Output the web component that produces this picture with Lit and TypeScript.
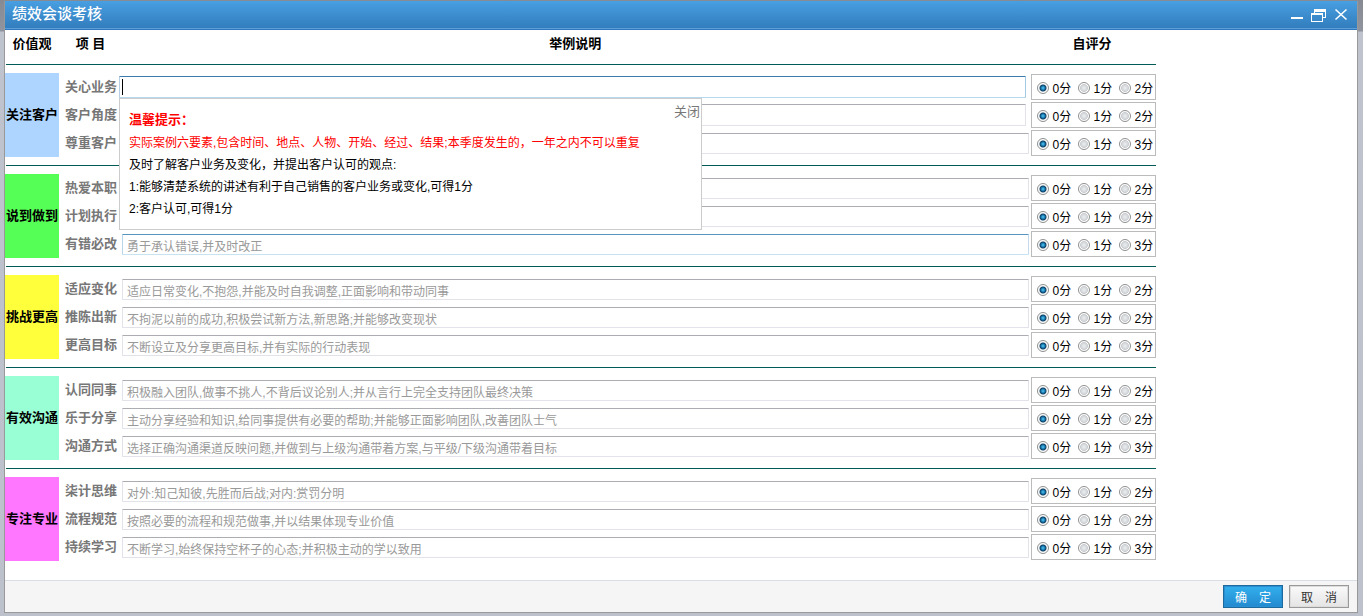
import { LitElement, html, css, nothing } from "lit";
import { customElement, state } from "lit/decorators.js";
import { classMap } from "lit/directives/class-map.js";

interface Item {
  name: string;
  hint: string;
  top: number;
  state?: "focus" | "edited" | "hover";
}

interface Group {
  name: string;
  tone: string;
  items: Item[];
}

const GROUPS: Group[] = [
  {
    name: "关注客户",
    tone: "blue",
    items: [
      { name: "关心业务", hint: "", top: 2, state: "focus" },
      { name: "客户角度", hint: "", top: 2, state: "edited" },
      { name: "尊重客户", hint: "", top: 3 },
    ],
  },
  {
    name: "说到做到",
    tone: "green",
    items: [
      { name: "热爱本职", hint: "", top: 2 },
      { name: "计划执行", hint: "", top: 2 },
      { name: "有错必改", hint: "勇于承认错误,并及时改正", top: 3, state: "hover" },
    ],
  },
  {
    name: "挑战更高",
    tone: "yellow",
    items: [
      { name: "适应变化", hint: "适应日常变化,不抱怨,并能及时自我调整,正面影响和带动同事", top: 2 },
      { name: "推陈出新", hint: "不拘泥以前的成功,积极尝试新方法,新思路;并能够改变现状", top: 2 },
      { name: "更高目标", hint: "不断设立及分享更高目标,并有实际的行动表现", top: 3 },
    ],
  },
  {
    name: "有效沟通",
    tone: "mint",
    items: [
      { name: "认同同事", hint: "积极融入团队,做事不挑人,不背后议论别人;并从言行上完全支持团队最终决策", top: 2 },
      { name: "乐于分享", hint: "主动分享经验和知识,给同事提供有必要的帮助;并能够正面影响团队,改善团队士气", top: 2 },
      { name: "沟通方式", hint: "选择正确沟通渠道反映问题,并做到与上级沟通带着方案,与平级/下级沟通带着目标", top: 3 },
    ],
  },
  {
    name: "专注专业",
    tone: "pink",
    items: [
      { name: "柒计思维", hint: "对外:知己知彼,先胜而后战;对内:赏罚分明", top: 2 },
      { name: "流程规范", hint: "按照必要的流程和规范做事,并以结果体现专业价值", top: 2 },
      { name: "持续学习", hint: "不断学习,始终保持空杯子的心态;并积极主动的学以致用", top: 3 },
    ],
  },
];

@customElement("score-picker")
export class ScorePicker extends LitElement {
  static properties = { name: { type: String }, label: { type: String }, top: { type: Number } };
  declare name: string;
  declare label: string;
  declare top: number;

  static styles = css`
    :host {
      display: block;
    }
    .box {
      box-sizing: border-box;
      height: 26px;
      border: 1px solid #bbb;
      padding: 3px 0 0 5px;
      display: grid;
      grid-template-columns: 41px 41px auto;
      align-items: center;
      background: #fff;
    }
    .choice {
      display: flex;
      align-items: center;
      gap: 4px;
      color: #000;
      white-space: nowrap;
    }
    .dot {
      appearance: none;
      box-sizing: border-box;
      flex: none;
      width: 12px;
      height: 12px;
      margin: 0 0 2px;
      border: 1px solid #8e8f8f;
      border-radius: 50%;
      background: radial-gradient(circle closest-side, #eceeef 0, #d3d6d9 60%, #c9ccd0 72%, #fff 86%);
    }
    .dot:checked {
      background: radial-gradient(circle closest-side, #5cc6ee 0, #1f8cc4 30%, #0f4166 60%, #e4e8eb 78%, #fff 90%);
    }
  `;

  render() {
    return html`<div class="box" role="radiogroup" aria-label=${this.label}>
      ${[0, 1, this.top].map(
        (n) => html`<label class="choice"
          ><input class="dot" type="radio" name=${this.name} value=${n} ?checked=${n === 0} /><span>${n}分</span></label
        >`
      )}
    </div>`;
  }
}

@customElement("app-root")
export class AppRoot extends LitElement {
  @state() private tipOpen = true;

  static styles = css`
    :host {
      display: flex;
      box-sizing: border-box;
      min-height: 100vh;
      padding: 1px 5px 3px 4px;
      font: 12px/18px "Liberation Sans", "Noto Sans CJK SC", sans-serif;
      color: #000;
      background: linear-gradient(#858a93 0, #8f949e 31px, #bfc3ce 32px, #bcc1cb 100%);
    }
    .dialog {
      flex: 1;
      min-width: 0;
      display: flex;
      flex-direction: column;
      border: 1px solid #999;
      border-top-width: 0;
      background: #fff;
    }
    .titlebar {
      box-sizing: border-box;
      height: 29px;
      display: flex;
      align-items: center;
      justify-content: space-between;
      padding: 0 6px 2px 7px;
      background: linear-gradient(#489fe1, #317cbc);
      border-bottom: 1px solid #2f78c0;
      box-shadow: inset 0 -1px #5f9fd8;
      color: #fff;
    }
    .title {
      margin: 0;
      font-size: 15px;
      line-height: 22px;
      font-weight: 500;
    }
    .tools {
      display: flex;
    }
    .tool {
      width: 24px;
      height: 20px;
      padding: 0;
      border: 0;
      background: none;
      color: inherit;
    }
    .tool svg {
      display: block;
    }
    .body {
      flex: 1;
      padding-bottom: 18px;
    }
    .sheet {
      width: 85.1%;
      table-layout: fixed;
      border-collapse: separate;
      border-spacing: 0;
    }
    .sheet th,
    .sheet td {
      padding: 0;
    }
    .col-value {
      width: 54px;
    }
    .col-item {
      width: 63px;
    }
    .col-score {
      width: 127px;
    }
    .sheet .head th {
      height: 24px;
      padding-top: 2px;
      font-size: 13px;
      font-weight: bold;
    }
    .rule {
      height: 1px;
      margin: 8px 0 8px 1px;
      border: 0;
      background: #005b56;
    }
    .value {
      font-size: 13px;
      font-weight: bold;
      white-space: nowrap;
    }
    .blue {
      background: #add5ff;
    }
    .green {
      background: #55ff55;
    }
    .yellow {
      background: #ffff3c;
    }
    .mint {
      background: #99ffd4;
    }
    .pink {
      background: #ff77ff;
    }
    .row {
      height: 28px;
    }
    .item {
      font-size: 13px;
      font-weight: bold;
      color: #777;
      text-align: left;
      white-space: nowrap;
    }
    .item label {
      display: block;
      padding-left: 6px;
    }
    .entry {
      position: relative;
      vertical-align: top;
    }
    .text {
      display: block;
      box-sizing: border-box;
      width: 100%;
      height: 21px;
      margin: 4px 0 0;
      padding: 5px 4px 0;
      border: 1px solid #e2e3ea;
      border-top-color: #abadb3;
      border-radius: 1px;
      background: #fff;
      outline: 0;
      font: inherit;
      line-height: 16px;
      color: #000;
    }
    .text::placeholder {
      color: #999;
      opacity: 1;
    }
    .text.hover {
      border-color: #5794bf #c5daed #c7e2f1 #b7d5ea;
    }
    .text.edited,
    .text.focus {
      height: 22px;
      margin: 3px 0 0 -3px;
    }
    .text.focus {
      border-color: #3d7bad #a4c9e3 #b7d9ed #b5cfe7;
      background: linear-gradient(#000, #000) 2px 2px / 1px 16px no-repeat #fff;
      caret-color: transparent;
    }
    .sheet .score {
      padding-left: 2px;
    }
    .tip {
      position: absolute;
      z-index: 2;
      top: 25px;
      left: -3px;
      box-sizing: border-box;
      width: 583px;
      padding: 9px;
      border: 1px solid #ccc;
      background: #fff;
      line-height: 22px;
    }
    .tip p {
      margin: 0;
    }
    .tip .tip-title {
      font-size: 13px;
      line-height: 24px;
      font-weight: bold;
      color: #f00;
    }
    .tip .warn {
      color: #f00;
    }
    .close {
      position: absolute;
      top: 4px;
      right: 1px;
      padding: 0;
      border: 0;
      background: none;
      font: inherit;
      font-size: 13px;
      line-height: 18px;
      color: #777;
    }
    .footer {
      display: flex;
      justify-content: flex-end;
      gap: 6px;
      padding: 4px 8px 4px;
      border-top: 1px solid #d6dde5;
      background: #f5f5f5;
    }
    .btn {
      width: 60px;
      height: 23px;
      padding: 2px 0 0;
      border: 1px solid #999;
      background: linear-gradient(#fafafa, #e4e4e4);
      box-shadow: inset 0 0 0 1px #dcdcdc;
      font: inherit;
      color: #333;
    }
    .btn.primary {
      border-color: #1c6a9e;
      background: linear-gradient(#33b0ed, #2389cf);
      box-shadow: inset 0 0 0 1px #2a8fd0;
      color: #fff;
    }
  `;

  private tip() {
    return html`<div class="tip" role="note">
      <button class="close" type="button" @click=${() => (this.tipOpen = false)}>关闭</button>
      <p class="tip-title">温馨提示：</p>
      <p class="warn">实际案例六要素,包含时间、地点、人物、开始、经过、结果;本季度发生的，一年之内不可以重复</p>
      <p>及时了解客户业务及变化，并提出客户认可的观点:</p>
      <p>1:能够清楚系统的讲述有利于自己销售的客户业务或变化,可得1分</p>
      <p>2:客户认可,可得1分</p>
    </div>`;
  }

  private group(g: Group, gi: number) {
    return html`<tbody>
      <tr>
        <td colspan="4"><hr class="rule" /></td>
      </tr>
      ${g.items.map((item, i) => {
        const id = `item-${gi}-${i}`;
        return html`<tr class="row">
          ${i === 0 ? html`<th class="value ${g.tone}" rowspan=${g.items.length} scope="rowgroup">${g.name}</th>` : nothing}
          <th class="item" scope="row"><label for=${id}>${item.name}</label></th>
          <td class="entry">
            <input
              id=${id}
              type="text"
              placeholder=${item.hint}
              class=${classMap({
                text: true,
                focus: item.state === "focus",
                edited: item.state === "edited",
                hover: item.state === "hover",
              })}
            />
            ${item.state === "focus" && this.tipOpen ? this.tip() : nothing}
          </td>
          <td class="score">
            <score-picker .name=${`score-${gi}-${i}`} .label=${item.name} .top=${item.top}></score-picker>
          </td>
        </tr>`;
      })}
    </tbody>`;
  }

  render() {
    return html`<section class="dialog" role="dialog" aria-labelledby="title">
      <header class="titlebar">
        <h1 class="title" id="title">绩效会谈考核</h1>
        <div class="tools">
          <button class="tool" type="button" aria-label="最小化">
            <svg width="24" height="20" viewBox="0 0 24 20"><path fill="#fff" d="M12 13h12v2H12z" /></svg>
          </button>
          <button class="tool" type="button" aria-label="还原">
            <svg width="24" height="20" viewBox="0 0 24 20" fill="#fff">
              <path d="M11 5h12v9h-3v-1h2V8H12v1h-1z" />
              <path fill-rule="evenodd" d="M8 9h12v9H8zM9 11v6h10v-6z" />
            </svg>
          </button>
          <button class="tool" type="button" aria-label="关闭窗口">
            <svg width="24" height="20" viewBox="0 0 24 20" fill="none" stroke="#fff" stroke-width="1.6">
              <path d="M8.500 5.500l11 10M19.500 5.500l-11 10" />
            </svg>
          </button>
        </div>
      </header>
      <main class="body">
        <table class="sheet">
          <colgroup>
            <col class="col-value" />
            <col class="col-item" />
            <col />
            <col class="col-score" />
          </colgroup>
          <thead class="head">
            <tr>
              <th scope="col">价值观</th>
              <th scope="col">项 目</th>
              <th scope="col">举例说明</th>
              <th scope="col">自评分</th>
            </tr>
          </thead>
          ${GROUPS.map((g, i) => this.group(g, i))}
        </table>
      </main>
      <footer class="footer">
        <button class="btn primary" type="button">确　定</button>
        <button class="btn" type="button">取　消</button>
      </footer>
    </section>`;
  }
}
